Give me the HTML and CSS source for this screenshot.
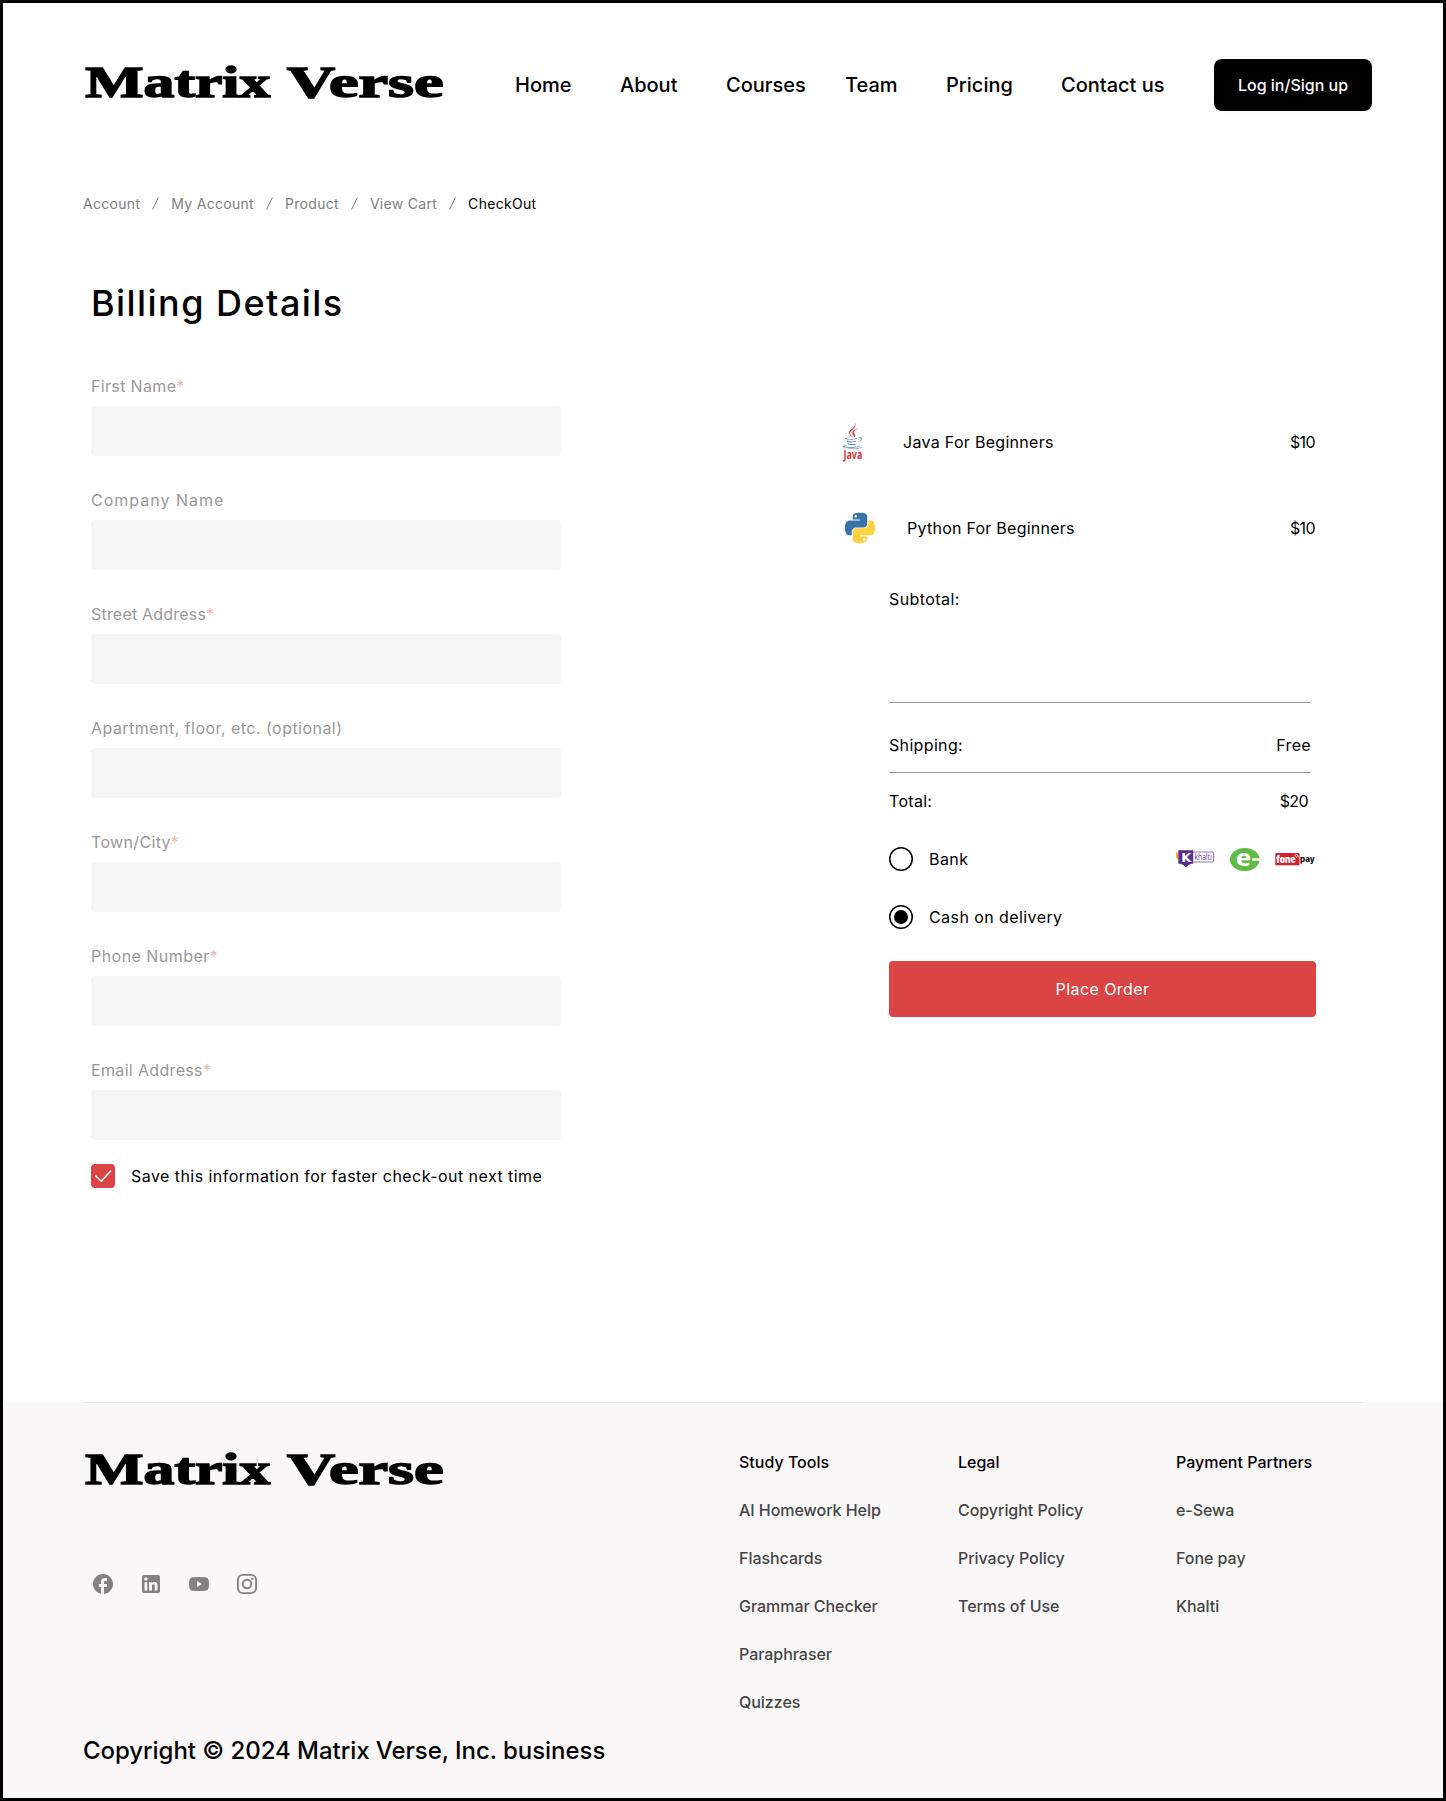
FILE: index.html
```html
<!DOCTYPE html>
<html lang="en">
<head>
<meta charset="utf-8">
<title>Matrix Verse – Checkout</title>
<link rel="stylesheet" href="styles.css">
</head>
<body>
<div class="page">
  <header class="header">
    <svg class="logo" width="373" height="52" viewBox="0 0 373 52"><text class="logo-text" y="37.800"><tspan x="2.300" textLength="185" lengthAdjust="spacingAndGlyphs">Matrix</tspan> <tspan x="204" textLength="156.500" lengthAdjust="spacingAndGlyphs">Verse</tspan></text></svg>
    <nav class="nav">
      <a>Home</a><a>About</a><a>Courses</a><a>Team</a><a>Pricing</a><a>Contact us</a>
      <button class="login">Log in/Sign up</button>
    </nav>
  </header>

  <nav class="breadcrumb">
    <a>Account</a>
    <svg class="slash" viewBox="0 0 7 13"><path d="M6.4.5.6 12.5"/></svg>
    <a>My Account</a>
    <svg class="slash" viewBox="0 0 7 13"><path d="M6.4.5.6 12.5"/></svg>
    <a>Product</a>
    <svg class="slash" viewBox="0 0 7 13"><path d="M6.4.5.6 12.5"/></svg>
    <a>View Cart</a>
    <svg class="slash" viewBox="0 0 7 13"><path d="M6.4.5.6 12.5"/></svg>
    <a class="current">CheckOut</a>
  </nav>

  <main class="checkout">
    <section class="billing">
      <h1>Billing Details</h1>
      <form class="form">
        <label class="field"><span>First Name<i>*</i></span><input type="text"></label>
        <label class="field company"><span>Company Name</span><input type="text"></label>
        <label class="field street"><span>Street Address<i>*</i></span><input type="text"></label>
        <label class="field apartment"><span>Apartment, floor, etc. (optional)</span><input type="text"></label>
        <label class="field"><span>Town/City<i>*</i></span><input type="text"></label>
        <label class="field phone"><span>Phone Number<i>*</i></span><input type="text"></label>
        <label class="field"><span>Email Address<i>*</i></span><input type="text"></label>
      </form>
      <div class="save">
        <svg width="24" height="24" viewBox="0 0 24 24"><rect width="24" height="24" rx="4" fill="#db4444"/><path d="M4.6 11.9 10.3 17.3 19.6 7" fill="none" stroke="#fff" stroke-width="1.5" stroke-linecap="round" stroke-linejoin="round"/></svg>
        <span>Save this information for faster check-out next time</span>
      </div>
    </section>

    <section class="summary">
      <div class="item java">
        <svg width="22" height="44" viewBox="0 0 22 44">
          <g transform="translate(-3 2.7) scale(.208)">
            <path fill="#4a86c0" d="M47.617 98.12s-4.767 2.774 3.397 3.71c9.892 1.13 14.947.968 25.845-1.092 0 0 2.871 1.795 6.873 3.351-24.439 10.47-55.308-.607-36.115-5.969zm-2.988-13.665s-5.348 3.959 2.823 4.805c10.567 1.091 18.91 1.18 33.354-1.6 0 0 1.993 2.025 5.132 3.131-29.542 8.64-62.446.68-41.309-6.336zM102.123 108.229s3.529 2.91-3.888 5.159c-14.102 4.272-58.706 5.56-71.094.171-4.451-1.938 3.899-4.625 6.526-5.192 2.739-.593 4.303-.485 4.303-.485-4.953-3.487-32.013 6.85-13.743 9.815 49.821 8.076 90.817-3.637 77.896-9.468zM49.912 70.294s-22.686 5.389-8.033 7.348c6.188.828 18.518.638 30.011-.326 9.39-.789 18.813-2.474 18.813-2.474s-3.308 1.419-5.704 3.053c-23.042 6.061-67.544 3.238-54.731-2.958 10.832-5.239 19.644-4.643 19.644-4.643zM90.609 93.041c23.421-12.167 12.591-23.86 5.032-22.285-1.848.385-2.677.72-2.677.72s.688-1.079 2-1.543c14.953-5.255 26.451 15.503-4.823 23.725 0-.002.359-.327.468-.617zM52.214 126.021c22.476 1.437 57-.8 57.817-11.436 0 0-1.571 4.032-18.577 7.231-19.186 3.612-42.854 3.191-56.887.874 0 .001 2.875 2.381 17.647 3.331z"/>
            <path fill="#d8383c" d="M69.802 61.271c6.025 6.935-1.58 13.17-1.58 13.17s15.289-7.891 8.269-17.777c-6.559-9.215-11.587-13.792 15.635-29.58 0 .001-42.731 10.67-22.324 34.187zM76.491 1.587s12.968 12.976-12.303 32.923c-20.266 16.006-4.621 25.13-.007 35.559-11.831-10.673-20.509-20.07-14.688-28.815 8.548-12.834 32.229-19.059 26.998-39.667z"/>
          </g>
          <text class="java-word" x="1.4" y="38.800" textLength="19" lengthAdjust="spacingAndGlyphs">Java</text>
        </svg>
        <span>Java For Beginners</span><b>$10</b>
      </div>
      <div class="item python">
        <svg width="32" height="32" viewBox="-4 0 128 128">
          <path fill="#3871a3" d="M49.33 62h29.159C86.606 62 93 55.132 93 46.981V19.183c0-7.912-6.632-13.856-14.555-15.176-5.014-.835-10.195-1.215-15.187-1.191-4.99.023-9.612.448-13.805 1.191C37.098 6.188 35 10.758 35 19.183V30h29v4H23.776c-8.484 0-15.914 5.108-18.237 14.811-2.681 11.12-2.8 17.919 0 29.53C7.614 86.983 12.569 93 21.054 93H31V79.952C31 70.315 39.428 62 49.33 62zm-1.838-39.11c-3.026 0-5.478-2.479-5.478-5.545 0-3.079 2.451-5.581 5.478-5.581 3.015 0 5.479 2.502 5.479 5.581-.001 3.066-2.465 5.545-5.479 5.545z"/>
          <path fill="#ffd140" d="M122.281 48.811C120.183 40.363 116.178 34 107.682 34H97v12.981C97 57.031 88.206 65 78.489 65H49.33C41.342 65 35 72.326 35 80.326v27.8c0 7.91 6.745 12.564 14.462 14.834 9.242 2.717 17.994 3.208 29.051 0C85.862 120.831 93 116.549 93 108.126V97H64v-4h43.682c8.484 0 11.647-5.776 14.599-14.66 3.047-9.145 2.916-17.799 0-29.529zm-41.955 55.606c3.027 0 5.479 2.479 5.479 5.547 0 3.076-2.451 5.579-5.479 5.579-3.015 0-5.478-2.502-5.478-5.579 0-3.068 2.463-5.547 5.478-5.547z"/>
        </svg>
        <span>Python For Beginners</span><b>$10</b>
      </div>
      <div class="totals">
        <div class="row subtotal"><span>Subtotal:</span></div>
        <div class="row shipping"><span>Shipping:</span><span>Free</span></div>
        <div class="row total"><span>Total:</span><b>$20</b></div>
        <div class="option">
          <svg width="24" height="24" viewBox="0 0 24 24"><circle cx="12" cy="12" r="11.25" fill="none" stroke="#000" stroke-width="1.5"/></svg>
          <span>Bank</span>
          <div class="partners">
            <svg width="39" height="24" viewBox="0 0 39 24">
              <path d="M0 5.5h2.2v7L0 10.5z" fill="#f6a93b"/>
              <rect x="15.5" y="5" width="22" height="10" rx="1" fill="#fff" stroke="#7a55a5" stroke-width=".8"/>
              <path d="M2.3 3.3h14.9v13.2q-4.8.6-7.4 4-2.4-3.4-7.5-4z" fill="#5c2d91"/>
              <text class="khalti-k" x="5.300" y="15.300">K</text>
              <text class="khalti" x="18.6" y="13" textLength="17" lengthAdjust="spacingAndGlyphs">khalti</text>
            </svg>
            <svg width="30" height="24" viewBox="0 0 30 24">
              <ellipse cx="14.8" cy="12.5" rx="14.8" ry="11.5" fill="#60bb46"/>
              <path d="M22 11.300h8v2.400h-8z" fill="#fff"/>
              <text class="esewa" x="5.800" y="19" textLength="15.500" lengthAdjust="spacingAndGlyphs">e</text>
            </svg>
            <svg width="41" height="24" viewBox="0 0 41 24">
              <rect x=".3" y="6" width="24.2" height="12.2" rx=".8" fill="#d2202f"/>
              <text class="fone" x="1.2" y="16" textLength="19.5" lengthAdjust="spacingAndGlyphs">fone</text>
              <path d="M19.6 8.5q2 .2 2.1 2.4M20.3 6.9q2.9.2 3 3.4" fill="none" stroke="#fff" stroke-width=".8"/>
              <text class="pay" x="25" y="15.4" textLength="14.8" lengthAdjust="spacingAndGlyphs">pay</text>
            </svg>
          </div>
        </div>
        <div class="option">
          <svg width="24" height="24" viewBox="0 0 24 24"><circle cx="12" cy="12" r="11.25" fill="none" stroke="#000" stroke-width="1.5"/><circle cx="12" cy="12" r="7"/></svg>
          <span>Cash on delivery</span>
        </div>
        <button class="order">Place Order</button>
      </div>
    </section>
  </main>

  <footer class="footer">
    <div class="footer-top">
      <div class="brand">
        <svg class="logo" width="373" height="52" viewBox="0 0 373 52"><text class="logo-text" y="37.800"><tspan x="2.300" textLength="185" lengthAdjust="spacingAndGlyphs">Matrix</tspan> <tspan x="204" textLength="156.500" lengthAdjust="spacingAndGlyphs">Verse</tspan></text></svg>
        <div class="social">
          <svg viewBox="0 0 24 24"><path d="M22 12c0-5.52-4.48-10-10-10S2 6.48 2 12c0 4.84 3.44 8.87 8 9.8V15H8v-3h2V9.5C10 7.57 11.57 6 13.5 6H16v3h-2c-.55 0-1 .45-1 1v2h3v3h-3v6.95c5.05-.5 9-4.76 9-9.95z"/></svg>
          <svg viewBox="0 0 24 24"><path d="M19 3a2 2 0 0 1 2 2v14a2 2 0 0 1-2 2H5a2 2 0 0 1-2-2V5a2 2 0 0 1 2-2h14m-.5 15.5v-5.3a3.26 3.26 0 0 0-3.26-3.26c-.85 0-1.84.52-2.32 1.3v-1.11h-2.79v8.37h2.79v-4.93c0-.77.62-1.4 1.39-1.4a1.4 1.4 0 0 1 1.4 1.4v4.93h2.79M6.88 8.56a1.68 1.68 0 0 0 1.68-1.68c0-.93-.75-1.69-1.68-1.69a1.69 1.69 0 0 0-1.69 1.69c0 .93.76 1.68 1.69 1.68m1.39 9.94v-8.37H5.5v8.37h2.77z"/></svg>
          <svg viewBox="0 0 24 24"><path fill-rule="evenodd" d="M5.5 5.2Q12 4.6 18.500 5.2 21.300 5.500 21.700 8.200 22.200 12 21.700 15.800 21.300 18.500 18.500 18.800 12 19.400 5.500 18.800 2.700 18.500 2.300 15.800 1.800 12 2.300 8.200 2.700 5.500 5.500 5.200zM10 9v6l4.800-3z"/></svg>
          <svg viewBox="0 0 24 24"><g fill="none" stroke="#828282" stroke-width="1.900"><rect x="2.900" y="2.900" width="18.200" height="18.200" rx="5"/><circle cx="12" cy="12" r="4.200"/></g><circle cx="17.300" cy="6.700" r="1.200"/></svg>
        </div>
      </div>
      <div class="links">
        <div class="col"><h2>Study Tools</h2><a>AI Homework Help</a><a>Flashcards</a><a>Grammar Checker</a><a>Paraphraser</a><a>Quizzes</a></div>
        <div class="col"><h2>Legal</h2><a>Copyright Policy</a><a>Privacy Policy</a><a>Terms of Use</a></div>
        <div class="col"><h2>Payment Partners</h2><a>e-Sewa</a><a>Fone pay</a><a>Khalti</a></div>
      </div>
    </div>
    <p class="copyright">Copyright © 2024 Matrix Verse, Inc. business</p>
  </footer>
</div>
</body>
</html>
```
FILE: styles.css
```css
* { box-sizing: border-box; }

body {
  margin: 0;
  background: #fff;
  color: #000;
  font: 400 16px/24px Inter, sans-serif;
}

svg { display: block; flex: none; overflow: visible; }
button { border: 0; padding: 0; color: #fff; font: inherit; letter-spacing: inherit; }

.page {
  width: 1446px;
  height: 1801px;
  border: 3px solid #000;
  overflow: hidden;
}

/* Header */
.header {
  display: flex;
  padding: 56px 0 0 80px;
}
.logo-text {
  font: bold 43.500px "Liberation Serif", serif;
  stroke: #000;
  stroke-width: 1.500px;
}
.nav {
  display: grid;
  grid-template-columns: 105px 106px 119px 101px 115px 153px 158px;
  align-items: center;
  margin-left: 59px;
  font-size: 20px;
  font-weight: 500;
}
.login {
  height: 52px;
  border-radius: 8px;
  background: #000;
  font-size: 16px;
  box-shadow: 0 1px 2px rgba(0, 0, 0, .05);
}

/* Breadcrumb */
.breadcrumb {
  display: flex;
  align-items: center;
  gap: 12px;
  padding: 82px 0 0 80px;
  font-size: 14px;
  line-height: 21px;
  letter-spacing: .3px;
  color: #808080;
}
.breadcrumb .current { color: #000; }
.slash { width: 7px; height: 13px; fill: none; stroke: #808080; stroke-width: 1; }

/* Checkout */
.checkout {
  display: flex;
  justify-content: space-between;
  padding: 67px 127px 214px 88px;
  letter-spacing: .42px;
}
h1 {
  margin: 0 0 49px;
  font-size: 36px;
  font-weight: 500;
  line-height: 44px;
  letter-spacing: 1.44px;
}
.billing { width: 470px; }
.form { display: flex; flex-direction: column; gap: 32px; }
.field { display: flex; flex-direction: column; gap: 8px; color: #999; letter-spacing: .34px; }
.field i { font-style: normal; color: #f1b4b4; }
.company { letter-spacing: 1px; }
.street { letter-spacing: .2px; }
.apartment { letter-spacing: .46px; }
.phone { letter-spacing: .46px; }
.field input {
  height: 50px;
  border: 0;
  border-radius: 4px;
  background: #f5f5f5;
}
.save { display: flex; gap: 16px; margin-top: 24px; letter-spacing: .45px; }

.summary { width: 474px; padding-top: 139px; }
.item { display: flex; align-items: center; height: 44px; }
.item b, .total b { margin-left: auto; font-weight: 400; letter-spacing: -.6px; }
.item b { padding-right: 1px; }
.java span { margin-left: 39px; letter-spacing: .3px; }
.python { margin-top: 42px; padding-left: 1px; }
.python span { margin-left: 32px; letter-spacing: .25px; }
.totals { display: flex; flex-direction: column; margin: 37px 0 0 47px; }
.row { display: flex; justify-content: space-between; margin-right: 5px; }
.subtotal { padding-bottom: 91px; border-bottom: 1px solid #999; }
.shipping { padding: 30px 0 15px; border-bottom: 1px solid #999; letter-spacing: .34px; }
.total { padding: 16px 3px 0 0; letter-spacing: .3px; }
.option { display: flex; gap: 16px; margin-top: 34px; }
.partners { display: flex; gap: 15px; margin: 0 0 0 auto; }
.order {
  height: 56px;
  margin-top: 32px;
  border-radius: 4px;
  background: #db4444;
}

/* Brand marks */
.java-word { font: 700 11.500px "Open Sans", sans-serif; fill: #d8383c; letter-spacing: 0; }
.khalti-k { font: bold 13px "DejaVu Sans", sans-serif; fill: #fff; letter-spacing: 0; }
.khalti { font: 8.500px "Open Sans", sans-serif; fill: #5c2d91; letter-spacing: 0; }
.esewa { font: bold 24px "Noto Sans", sans-serif; fill: #fff; letter-spacing: 0; }
.fone { font: 900 9.500px Inter, sans-serif; fill: #fff; letter-spacing: 0; }
.pay { font: 800 8.500px Inter, sans-serif; fill: #111; letter-spacing: 0; }

/* Footer */
.footer {
  height: 396px;
  padding: 0 80px;
  background: #faf7f8;
  font-weight: 500;
}
.footer-top { display: flex; border-top: 1px solid #e6e6e6; }
.brand { width: 656px; padding-top: 43px; }
.social { display: flex; gap: 24px; margin: 74px 0 0 8px; }
.social svg { width: 24px; height: 24px; fill: #828282; }
.links {
  display: grid;
  grid-template-columns: 219px 218px auto;
  padding-top: 47px;
}
.col { display: flex; flex-direction: column; gap: 24px; color: #454545; }
.col a { letter-spacing: -.04px; }
.col h2 { margin: 0; font-size: 16px; font-weight: 500; color: #000; }
.copyright { margin: 21px 0 0; font-size: 24px; line-height: 32px; letter-spacing: -.05px; }
```
